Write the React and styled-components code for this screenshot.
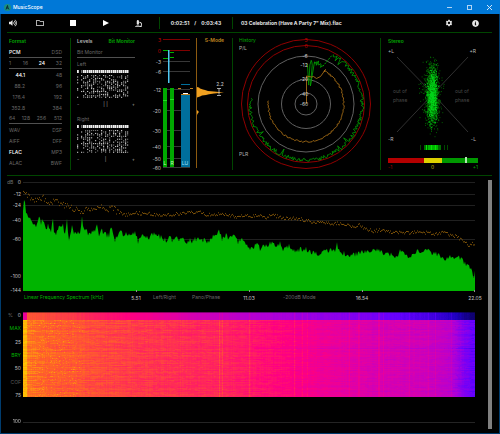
import React, { useEffect, useRef } from 'react';
import styled, { createGlobalStyle } from 'styled-components';
import {
  FaVolumeUp,
  FaRegFolder,
  FaMicroscope,
  FaInfoCircle,
} from 'react-icons/fa';
import { MdSettings } from 'react-icons/md';

const GlobalStyle = createGlobalStyle`
  * {
    box-sizing: border-box;
  }
  body {
    margin: 0;
    background: #000;
  }
  button {
    padding: 0;
    border: 0;
    background: none;
    font: inherit;
    color: inherit;
  }
  svg text {
    font-family: Inter, "Liberation Sans", sans-serif;
    font-size: 5px;
  }
`;

const Window = styled.div`
  border: 1px solid #003c6e;
  border-top: 0;
  background: #000;
  color: #c0c0c0;
  font-family: Inter, "Liberation Sans", sans-serif;
  font-size: 5px;
  line-height: 6px;
`;

const TitleBar = styled.header`
  display: flex;
  align-items: center;
  height: 14px;
  margin: 0 -1px;
  padding: 0 2px 0 4px;
  background: #0078d7;
  color: #fff;
  gap: 2px;
`;

const Title = styled.h1`
  flex: 1;
  margin: 0;
  font-size: 5px;
  line-height: 6px;
  font-weight: 500;
`;

const WindowButton = styled.button`
  display: flex;
  justify-content: center;
  width: 18px;
`;

const Toolbar = styled.div`
  display: flex;
  align-items: center;
  height: 19px;
  margin: 0 7px 0 6px;
  padding-right: 4px;
  border-bottom: 1px solid #004600;
  color: #e6e6e6;
  font-weight: 700;
`;

const Tools = styled.nav`
  display: flex;
  margin: 0 4px 0 -4px;
`;

const ToolButton = styled.button`
  display: flex;
  align-items: center;
  justify-content: center;
  width: ${p => p.$width || 33}px;
  height: 12px;
  font-size: 8px;
`;

const Separator = styled.span`
  width: 1px;
  height: 12px;
  background: #004600;
`;

const Clock = styled.div`
  display: flex;
  justify-content: center;
  gap: 5px;
  width: 72px;
`;

const FileName = styled.div`
  flex: 1;
  padding-left: 8px;
  white-space: nowrap;
`;

const Panels = styled.div`
  display: grid;
  grid-template-columns: 63fr 162fr 148fr 112fr;
  margin: 0 7px 0 6px;
  padding: 5px 0;
  height: 143px;
  border-bottom: 1px solid #004600;
`;

const Panel = styled.section`
  display: flex;
  height: 132px;
  padding-left: ${p => p.$pad || 0}px;
  border-left: ${p => (p.$line ? '1px solid #004600' : '0')};
`;

const Column = styled.div`
  width: ${p => p.$width}px;
  margin-right: ${p => p.$gap || 0}px;
`;

const Heading = styled.h2`
  display: flex;
  justify-content: space-between;
  margin: 0;
  height: 9px;
  font-size: 5px;
  line-height: 6px;
  font-weight: 600;
  color: ${p => p.$color || '#00a800'};
`;

const Row = styled.div`
  display: grid;
  grid-template-columns: ${p => p.$columns || '1fr 1fr'};
  align-items: center;
  height: 11px;
  border-bottom: ${p => (p.$rule ? '1px solid #505050' : '0')};
  color: #686868;
  span {
    text-align: right;
  }
  span:first-child {
    text-align: left;
  }
`;

const RateRow = styled(Row)`
  grid-template-columns: 16px 1fr;
  span:first-child {
    text-align: right;
  }
`;

const Value = styled.span`
  color: ${p => (p.$on ? '#fff' : 'inherit')};
  font-weight: ${p => (p.$on ? 500 : 400)};
`;

const BitScale = styled.div`
  display: flex;
  justify-content: space-between;
  align-items: center;
  height: 11px;
  margin-bottom: 4px;
  color: #a0a0a0;
`;

const Drawing = styled.svg`
  display: block;
  flex: none;
`;

const Plot = styled.svg`
  display: block;
  width: 100%;
  height: ${p => p.$height}px;
`;

const StereoBody = styled.div`
  width: 90px;
`;

const Correlation = styled.div`
  display: grid;
  grid-template-columns: 36fr 17fr 36fr;
  height: 4px;
`;

const Zone = styled.span`
  display: flex;
  padding-left: ${p => p.$pad || 0}px;
  background: ${p => p.$color};
`;

const Marker = styled.i`
  width: 2px;
  height: 6px;
  margin-top: -1px;
  background: #b0e8b0;
`;

const Ends = styled.div`
  display: flex;
  justify-content: space-between;
  padding-top: 2px;
`;

const Tone = styled.span`
  color: ${p => p.$color};
`;

const Lower = styled.div`
  display: flex;
  padding: 3px 7px 4px 6px;
`;

const Charts = styled.main`
  flex: 1;
  min-width: 0;
`;

const ChartRow = styled.div`
  display: flex;
`;

const ChartArea = styled.div`
  flex: 1;
  min-width: 0;
  margin-right: 13px;
`;

const Scrollbar = styled.div`
  width: 4px;
  margin-top: 1px;
  background: #808080;
`;

const TickRow = styled.div`
  display: grid;
  grid-template-columns: repeat(4, 1fr);
  height: 20px;
  margin: 0 13px 0 16px;
  padding-top: 2px;
  color: #686868;
`;

const TickCell = styled.div`
  display: flex;
  align-items: flex-start;
  gap: 16px;
  padding-left: ${p => p.$pad}px;
  white-space: nowrap;
`;

const Tick = styled.span`
  width: 20px;
  margin: 1px -10px 0 auto;
  text-align: center;
  color: #c8c8c8;
`;

const HeatAxis = styled.div`
  display: flex;
  flex-direction: column;
  justify-content: space-between;
  align-items: flex-end;
  width: 16px;
  height: 86px;
  padding-right: 2px;
`;

const ZeroMark = styled.div`
  display: flex;
  justify-content: space-between;
  width: 13px;
`;

const HeatCanvas = styled.canvas`
  display: block;
  width: 100%;
  height: 85px;
`;

const Footer = styled.div`
  display: flex;
  align-items: center;
  height: 8px;
  margin: 19px 13px 4px 0;
`;

const FooterLabel = styled.span`
  width: 16px;
  padding-right: 2px;
  text-align: right;
`;

const FooterLine = styled.span`
  flex: 1;
  height: 1px;
  margin-top: 3px;
  background: #242424;
`;

// small seeded generator, so that every load draws the same signal
function makeRandom(seed) {
  let s = seed;
  return () => {
    s = (s * 1664525 + 1013904223) % 4294967296;
    return s / 4294967296;
  };
}

function interpolate(points, x) {
  for (let i = 1; i < points.length; i++) {
    const [x0, y0] = points[i - 1];
    const [x1, y1] = points[i];
    if (x <= x1) return y0 + ((y1 - y0) * (x - x0)) / (x1 - x0);
  }
  return points[points.length - 1][1];
}

const formats = [
  { cells: ['PCM', 'DSD'], on: 'PCM', rule: true },
  { cells: ['1', '16', '24', '32'], on: '24', rule: true, columns: '3px 16px 17px 17px' },
  { cells: ['44.1', '48'], on: '44.1', rate: true },
  { cells: ['88.2', '96'], rate: true },
  { cells: ['176.4', '192'], rate: true },
  { cells: ['352.8', '384'], rate: true },
  { cells: ['64', '128', '256', '512'], rule: true, columns: '6px 15px 16px 16px' },
  { cells: ['WAV', 'DSF'] },
  { cells: ['AIFF', 'DFF'] },
  { cells: ['FLAC', 'MP3'], on: 'FLAC' },
  { cells: ['ALAC', 'BWF'] },
];

function FormatPanel() {
  return (
    <Panel $pad={2}>
      <Column $width={53}>
        <Heading>Format</Heading>
        {formats.map(({ cells, on, rule, rate, columns }) => {
          const Line = rate ? RateRow : Row;
          return (
            <Line key={cells[0]} $rule={rule} $columns={columns}>
              {cells.map(c => (
                <Value key={c} $on={c === on}>{c}</Value>
              ))}
            </Line>
          );
        })}
      </Column>
    </Panel>
  );
}

function BitMatrix({ seed }) {
  const rnd = makeRandom(seed);
  const cells = [];
  for (let c = 0; c < 26; c++) {
    if (c === 1) continue;
    cells.push(
      <rect key={`t${c}`} x={c * 2} y="1" width={c % 3 ? 1.5 : 1.8} height="3" fill={c === 2 ? '#666' : '#eee'} />
    );
    for (let r = 0; r < 16; r++) {
      const v = rnd();
      if (c > 2 ? v > 0.42 : v > 0.7) {
        cells.push(
          <rect
            key={`${c}-${r}`}
            x={c * 2}
            y={6 + r * 1.45}
            width="1.2"
            height="1.1"
            fill={v > 0.7 ? '#c0c0c0' : '#707070'}
          />
        );
      }
    }
  }
  return (
    <Drawing width="58" height="29" viewBox="0 0 58 29">
      {cells}
    </Drawing>
  );
}

const meterScale = [
  ['3', 2, '#c00000'],
  ['0', 13, '#c00000'],
  ['-3', 24],
  ['-6', 34],
  ['-12', 52],
  ['-20', 73],
  ['-30', 93],
  ['-40', 109],
  ['-50', 121],
  ['-60', 130],
];

function LevelMeter() {
  return (
    <Drawing width="80" height="132" viewBox="0 0 80 132">
      {meterScale.map(([label, y, color]) => (
        <g key={label}>
          <rect x="15" y={y - 1} width="27" height="1" fill={color ? '#800000' : '#383838'} />
          <text x="13" y={y + 2} textAnchor="end" fill={color || '#c0c0c0'}>{label}</text>
        </g>
      ))}
      <rect x="15" y="50" width="4" height="79" fill="#00a800" />
      <rect x="22" y="50" width="4" height="79" fill="#00a800" />
      <rect x="15" y="62" width="4" height="1" fill="#20e020" />
      <rect x="22" y="61" width="4" height="1" fill="#20e020" />
      <path d="M15 12.5h5M22 14.5h4M15 20.5h5M22 19.5h4" stroke="#00b000" />
      <rect x="20" y="12" width="1.5" height="33" fill="#50c8f0" />
      <rect x="33" y="57" width="9" height="72" fill="#006f9c" />
      <path d="M33 46.5h9" stroke="#006f9c" />
      <path d="M30 50.5h3M42 50.5h3M33 56.5h9" stroke="#c08020" />
      <path d="M35 55.5h5" stroke="#fff" />
      <text x="17" y="127" textAnchor="middle" fill="#c0f0c0">L</text>
      <text x="24" y="127" textAnchor="middle" fill="#c0f0c0">R</text>
      <text x="37" y="127" textAnchor="middle" fill="#a0e0ff">LU</text>
      <path d="M48.5 0v130" stroke="#8c5a10" />
      <path
        d="M49 49l2 .5 1 1 3 1 2 .5 3 1 6 .5 10 1-10 1-5 .7-3 .8-4 .6-2 1-3 .8z M49 72l2 2-1 1-1 2z"
        fill="#f0a020"
      />
      <path d="M69 50.5h4M71 50.5v6M69 57.5h4" stroke="#d0d0d0" strokeWidth=".8" fill="none" />
      <text x="72" y="48" textAnchor="middle" fill="#c8c8c8">2.2</text>
      <text x="76" y="4" textAnchor="end" fill="#c08820" fontWeight="600">S-Mode</text>
    </Drawing>
  );
}

function LevelsPanel() {
  return (
    <Panel $line $pad={6}>
      <Column $width={58} $gap={13}>
        <Heading $color="#b4b4b4">
          Levels <Tone $color="#00a800">Bit Monitor</Tone>
        </Heading>
        <Row $rule $columns="1fr"><span>Bit Monitor</span></Row>
        <Row $columns="1fr"><span>Left</span></Row>
        <BitMatrix seed={7} />
        <BitScale><span>-</span><span>| |</span><span>+</span></BitScale>
        <Row $columns="1fr"><span>Right</span></Row>
        <BitMatrix seed={31} />
        <BitScale><span>-</span><span>|</span><span>+</span></BitScale>
      </Column>
      <LevelMeter />
    </Panel>
  );
}

function polar(cx, cy, r, deg) {
  const a = (deg * Math.PI) / 180;
  return `${(cx + r * Math.sin(a)).toFixed(2)} ${(cy - r * Math.cos(a)).toFixed(2)}`;
}

function HistoryPanel() {
  const rnd = makeRandom(19);
  const cx = 67;
  const cy = 66;
  const peak = [];
  const loudness = [];
  for (let d = 1; d <= 23; d += 1.1) {
    const dip = (d > 3 && d < 4.8) || (d > 9 && d < 10.5);
    peak.push(polar(cx, cy, dip ? 18 + rnd() * 3 : 39 + rnd() * 6, dip ? d + 4 : d * 1.05));
  }
  const ring = [];
  for (let d = 29; d <= 276; d += 1) {
    ring.push(polar(cx, cy, 54 + rnd() * 4 + (rnd() > 0.96 ? -4 : 0), d));
  }
  for (let d = 29; d <= 276; d += 2) {
    loudness.push(polar(cx, cy, 37 + rnd() * 1.6, d));
  }
  return (
    <Panel $line $pad={6}>
      <Drawing width="140" height="132" viewBox="0 0 140 132">
        <g fill="none" strokeWidth="1">
          <circle cx={cx} cy={cy} r="64.5" stroke="#900000" />
          <circle cx={cx} cy={cy} r="58.5" stroke="#900000" />
          <circle cx={cx} cy={cy} r="48" stroke="#606060" />
          <circle cx={cx} cy={cy} r="24.5" stroke="#606060" />
          <circle cx={cx} cy={cy} r="11" stroke="#606060" />
          <path d={`M${peak.join('L')}`} stroke="#00a800" strokeWidth=".8" />
          <path d={`M${polar(cx, cy, 41, 24)}L${polar(cx, cy, 55, 28)}`} stroke="#00a000" strokeDasharray="2 1" />
          <path d={`M${ring.join('L')}`} stroke="#00a000" strokeWidth=".8" />
          <path d={`M67.500 66V38l5 1 2-.5 3 2 4-2 5-7L${loudness.join('L')}`} stroke="#b87818" strokeWidth=".8" />
        </g>
        <g fill="#d0d0d0" textAnchor="middle">
          <text x="67" y="4" fill="#c00000">3</text>
          <text x="67" y="10" fill="#c00000">0</text>
          <text x="66" y="20">-6</text>
          <text x="65" y="29">-12</text>
          <text x="65" y="43">-20</text>
          <text x="65" y="58">-40</text>
          <text x="65" y="68">-60</text>
        </g>
        <text x="0" y="4" fill="#00a800">History</text>
        <text x="0" y="12" fill="#b0b0b0">P/L</text>
        <text x="0" y="118" fill="#b0b0b0">PLR</text>
      </Drawing>
    </Panel>
  );
}

function StereoPanel() {
  const rnd = makeRandom(53);
  const gauss = () => rnd() + rnd() + rnd() + rnd() - 2;
  let dots = '';
  let bright = '';
  for (let i = 0; i < 1400; i++) {
    const x = 44 + gauss() * (i % 5 ? 5 : 9);
    const y = 48 + gauss() * 25;
    dots += `M${x.toFixed(1)} ${y.toFixed(1)}h.8`;
    if (i % 3 === 0) bright += `M${(44 + gauss() * 4).toFixed(1)} ${(49 + gauss() * 20).toFixed(1)}h.9`;
  }
  return (
    <Panel $line $pad={7}>
      <StereoBody>
        <Heading>Stereo</Heading>
        <Drawing width="90" height="111" viewBox="0 0 90 111">
          <path d="M9 10l36 37 35-37M9 85l36-38 35 38" stroke="#303030" fill="none" />
          <g fill="#b8b8b8">
            <text x="0" y="6">+L</text>
            <text x="88" y="6" textAnchor="end">+R</text>
            <text x="0" y="94">-R</text>
            <text x="88" y="94" textAnchor="end">-L</text>
          </g>
          <g fill="#484848">
            <text x="5" y="46">out of</text>
            <text x="5" y="55">phase</text>
            <text x="67" y="46">out of</text>
            <text x="67" y="55">phase</text>
          </g>
          <path d={dots} stroke="#009000" strokeWidth=".8" />
          <path d={bright} stroke="#00d81c" strokeWidth=".9" />
          <rect x="36" y="98" width="17" height="5" fill="#006c00" />
          <rect x="40" y="98" width="10" height="5" fill="#00b400" />
          <path d="M32.500 98v5M56.500 98v5M59.500 98v5" stroke="#004800" />
          <path d="M38.500 98v5M43.500 98v5M47.500 98v5" stroke="#00e800" />
        </Drawing>
        <Correlation>
          <Zone $color="#b40000" />
          <Zone $color="#dcd000" />
          <Zone $color="#009800" $pad={23}><Marker /></Zone>
        </Correlation>
        <Ends>
          <Tone $color="#a00000">-1</Tone>
          <Tone $color="#c0b400">0</Tone>
          <Tone $color="#00a000">+1</Tone>
        </Ends>
      </StereoBody>
    </Panel>
  );
}

const spectrum = [
  [0, 28], [1, 17], [2, 19], [3, 30], [5, 31], [8, 38], [10, 40], [14, 43], [17, 32], [18, 40],
  [20, 36], [22, 44], [25, 42], [28, 48], [30, 37], [31, 48], [34, 49], [36, 43], [40, 42], [42, 53],
  [44, 36], [46, 56], [47, 55], [49, 42], [51, 50], [57, 49], [59, 35], [61, 47], [66, 50], [72, 48],
  [74, 40], [76, 52], [78, 45], [80, 50], [86, 52], [88, 41], [92, 57], [98, 48], [101, 54], [103, 47],
  [105, 54], [109, 49], [113, 50], [115, 58], [118, 51], [125, 54], [130, 51], [138, 53], [144, 58],
  [146, 50], [148, 56], [155, 55], [165, 58], [175, 55], [185, 58], [190, 52], [196, 48], [199, 56],
  [203, 50], [205, 54], [210, 53], [215, 58], [219, 56], [223, 63], [229, 65], [234, 59], [237, 66],
  [241, 61], [257, 60], [261, 67], [265, 62], [274, 67], [281, 65], [294, 70], [303, 67], [312, 67],
  [314, 61], [316, 68], [330, 72], [342, 67], [354, 67], [374, 73], [377, 67], [388, 74], [393, 67],
  [407, 68], [414, 71], [424, 75], [430, 73], [437, 75], [444, 81], [449, 87], [451, 94], [452, 88],
];

const peaks = [
  [0, 11], [4, 14], [11, 19], [19, 15], [26, 22], [32, 19], [37, 23], [44, 23], [51, 27], [60, 30],
  [66, 26], [71, 28], [77, 24], [84, 27], [90, 26], [95, 31], [104, 33], [110, 31], [144, 33],
  [164, 31], [177, 30], [184, 33], [204, 32], [211, 35], [227, 34], [237, 33], [242, 36], [249, 33],
  [260, 36], [277, 37], [290, 40], [320, 42], [330, 45], [337, 43], [342, 47], [350, 49], [360, 48],
  [367, 50], [387, 51], [397, 50], [410, 52], [420, 50], [427, 53], [434, 55], [440, 59], [445, 64],
  [449, 61], [452, 65],
];

const dbScale = [['0', 0], ['-12', 12], ['-24', 23], ['-40', 38], ['-60', 57], ['-100', 94], ['-144', 108]];

function SpectrumChart() {
  const rnd = makeRandom(11);
  let area = 'M0 112';
  let dots = '';
  for (let x = 0; x <= 452; x += 1) {
    const y = 4 + interpolate(spectrum, x) + (x > 4 ? (rnd() - 0.4) * 6 : 0);
    area += `L${x} ${y.toFixed(1)}`;
    const p = 3 + interpolate(peaks, x) + (rnd() - 0.5) * (x < 100 ? 6 : 3.4);
    dots += `M${x} ${p.toFixed(1)}h1`;
  }
  return (
    <ChartRow>
      <Drawing width="16" height="113" viewBox="0 0 16 113">
        <text x="0" y="5" fill="#707070">dB</text>
        {dbScale.map(([label, y]) => (
          <text key={label} x="14" y={y + 5} textAnchor="end" fill="#c0c0c0">{label}</text>
        ))}
      </Drawing>
      <ChartArea>
        <Plot $height={113} viewBox="0 0 452 113" preserveAspectRatio="none">
          {dbScale.map(([label, y]) => (
            <rect key={label} x="0" y={y + 3} width="452" height="1" fill="#202020" />
          ))}
          <path d={`${area}L452 112z`} fill="#00b400" />
          <path d={dots} stroke="#805408" strokeWidth="1" />
          <path d="M113.500 111v2M226.500 111v2M339.500 111v2M451.500 111v2" stroke="#909090" />
        </Plot>
      </ChartArea>
    </ChartRow>
  );
}

const palette = [
  [0, [0, 0, 40]],
  [0.15, [30, 0, 190]],
  [0.3, [100, 0, 255]],
  [0.45, [176, 0, 214]],
  [0.6, [226, 0, 164]],
  [0.7, [255, 0, 128]],
  [0.8, [255, 45, 84]],
  [0.9, [255, 104, 36]],
  [1, [255, 200, 0]],
];

function heatColor(v) {
  const t = Math.max(0, Math.min(1, v));
  return [0, 1, 2].map(i => interpolate(palette.map(([p, c]) => [p, c[i]]), t));
}

const bodyHeat = [
  [0, 0.98], [3, 0.98], [4, 0.92], [20, 0.89], [60, 0.86], [110, 0.82], [200, 0.78], [227, 0.75],
  [260, 0.71], [300, 0.64], [350, 0.57], [400, 0.54], [425, 0.49], [438, 0.38], [452, 0.28],
];
const headHeat = [
  [0, 0.62], [3, 0.66], [4, 0.87], [50, 0.82], [90, 0.73], [130, 0.65], [180, 0.54], [227, 0.47],
  [290, 0.4], [350, 0.34], [400, 0.25], [430, 0.16], [452, 0.06],
];

function Heatmap() {
  const ref = useRef(null);

  useEffect(() => {
    const canvas = ref.current;
    const ctx = canvas.getContext('2d');
    const { width, height } = canvas;
    const image = ctx.createImageData(width, height);
    const rnd = makeRandom(77);
    const cols = Array.from({ length: width }, (_, x) => (
      (rnd() - 0.5) * 0.02 + (x > 180 && rnd() > 0.95 ? 0.05 : 0)
    ));
    for (let y = 0; y < height; y++) {
      const streak = (rnd() - 0.5) * 0.035;
      const quiet = y === 36 ? -0.04 : 0;
      let run = 0;
      for (let x = 0; x < width; x++) {
        const head = y < 8;
        if (rnd() > 0.7) run = (rnd() - 0.5) * 0.045;
        let v = interpolate(head ? headHeat : bodyHeat, x);
        v += x < 4 ? 0 : cols[x];
        if (head) {
          v += (rnd() - 0.5) * 0.01;
        } else {
          v += streak + run + (x > 230 ? quiet : 0);
          if (x > 15 && x < 60 && rnd() > 0.92) v += 0.04;
        }
        const [r, g, b] = heatColor(v);
        const dim = y === 0 ? 0.6 : 1;
        image.data.set([r * dim, g * dim, b * dim, 255], (y * width + x) * 4);
      }
    }
    ctx.putImageData(image, 0, 0);
  }, []);

  return <HeatCanvas ref={ref} width={452} height={85} />;
}

function App() {
  return (
    <Window>
      <GlobalStyle />
      <TitleBar>
        <svg width="7" height="7" viewBox="0 0 14 14">
          <circle cx="7" cy="7" r="7" fill="#1c8f80" />
          <path d="M4 11l3-8 1 5 2 3M5 8h3" stroke="#0a2c38" strokeWidth="2" fill="none" />
        </svg>
        <Title>MusicScope</Title>
        <WindowButton aria-label="Minimize">
          <svg width="5" height="5"><path d="M0 2.500h5" stroke="#b0d4f4" /></svg>
        </WindowButton>
        <WindowButton aria-label="Maximize">
          <svg width="5" height="5"><rect x=".5" y=".5" width="4" height="4" fill="none" stroke="#b0d4f4" /></svg>
        </WindowButton>
        <WindowButton aria-label="Close">
          <svg width="5" height="5"><path d="M0 0l5 5M5 0l-5 5" stroke="#d0e6f8" /></svg>
        </WindowButton>
      </TitleBar>

      <Toolbar>
        <Tools>
          <ToolButton $width={20} aria-label="Volume"><FaVolumeUp /></ToolButton>
          <ToolButton aria-label="Open"><FaRegFolder /></ToolButton>
          <ToolButton aria-label="Stop"><svg width="6" height="6"><rect width="6" height="6" fill="#fff" /></svg></ToolButton>
          <ToolButton aria-label="Play"><svg width="6" height="6"><path d="M0 0l6 3-6 3z" fill="#fff" /></svg></ToolButton>
          <ToolButton aria-label="Analyze"><FaMicroscope size={7} /></ToolButton>
        </Tools>
        <Separator />
        <Clock><span>0:02:51</span><span>/</span><span>0:03:43</span></Clock>
        <Separator />
        <FileName>03 Celebration (Have A Party 7&quot; Mix).flac</FileName>
        <ToolButton $width={26} aria-label="Settings"><MdSettings /></ToolButton>
        <ToolButton $width={26} aria-label="Info"><FaInfoCircle size={7} /></ToolButton>
      </Toolbar>

      <Panels>
        <FormatPanel />
        <LevelsPanel />
        <HistoryPanel />
        <StereoPanel />
      </Panels>

      <Lower>
        <Charts>
          <SpectrumChart />
          <TickRow>
            <TickCell $pad={1}>
              <Tone $color="#00b400">Linear Frequency Spectrum [kHz]</Tone>
              <Tick>5.51</Tick>
            </TickCell>
            <TickCell $pad={17}>
              <button>Left/Right</button>
              <button>Pano/Phase</button>
              <Tick>11.03</Tick>
            </TickCell>
            <TickCell $pad={34}>
              <button>-200dB Mode</button>
              <Tick>16.54</Tick>
            </TickCell>
            <TickCell $pad={0}>
              <Tick>22.05</Tick>
            </TickCell>
          </TickRow>
          <ChartRow>
            <HeatAxis>
              <ZeroMark><Tone $color="#707070">%</Tone><span>0</span></ZeroMark>
              <button><Tone $color="#00b400">MAX</Tone></button>
              <span>25</span>
              <button><Tone $color="#00b400">BRY</Tone></button>
              <span>50</span>
              <button><Tone $color="#5a5a5a">COF</Tone></button>
              <span>75</span>
            </HeatAxis>
            <ChartArea>
              <Heatmap />
            </ChartArea>
          </ChartRow>
          <Footer>
            <FooterLabel>100</FooterLabel>
            <FooterLine />
          </Footer>
        </Charts>
        <Scrollbar />
      </Lower>
    </Window>
  );
}

export default App;
